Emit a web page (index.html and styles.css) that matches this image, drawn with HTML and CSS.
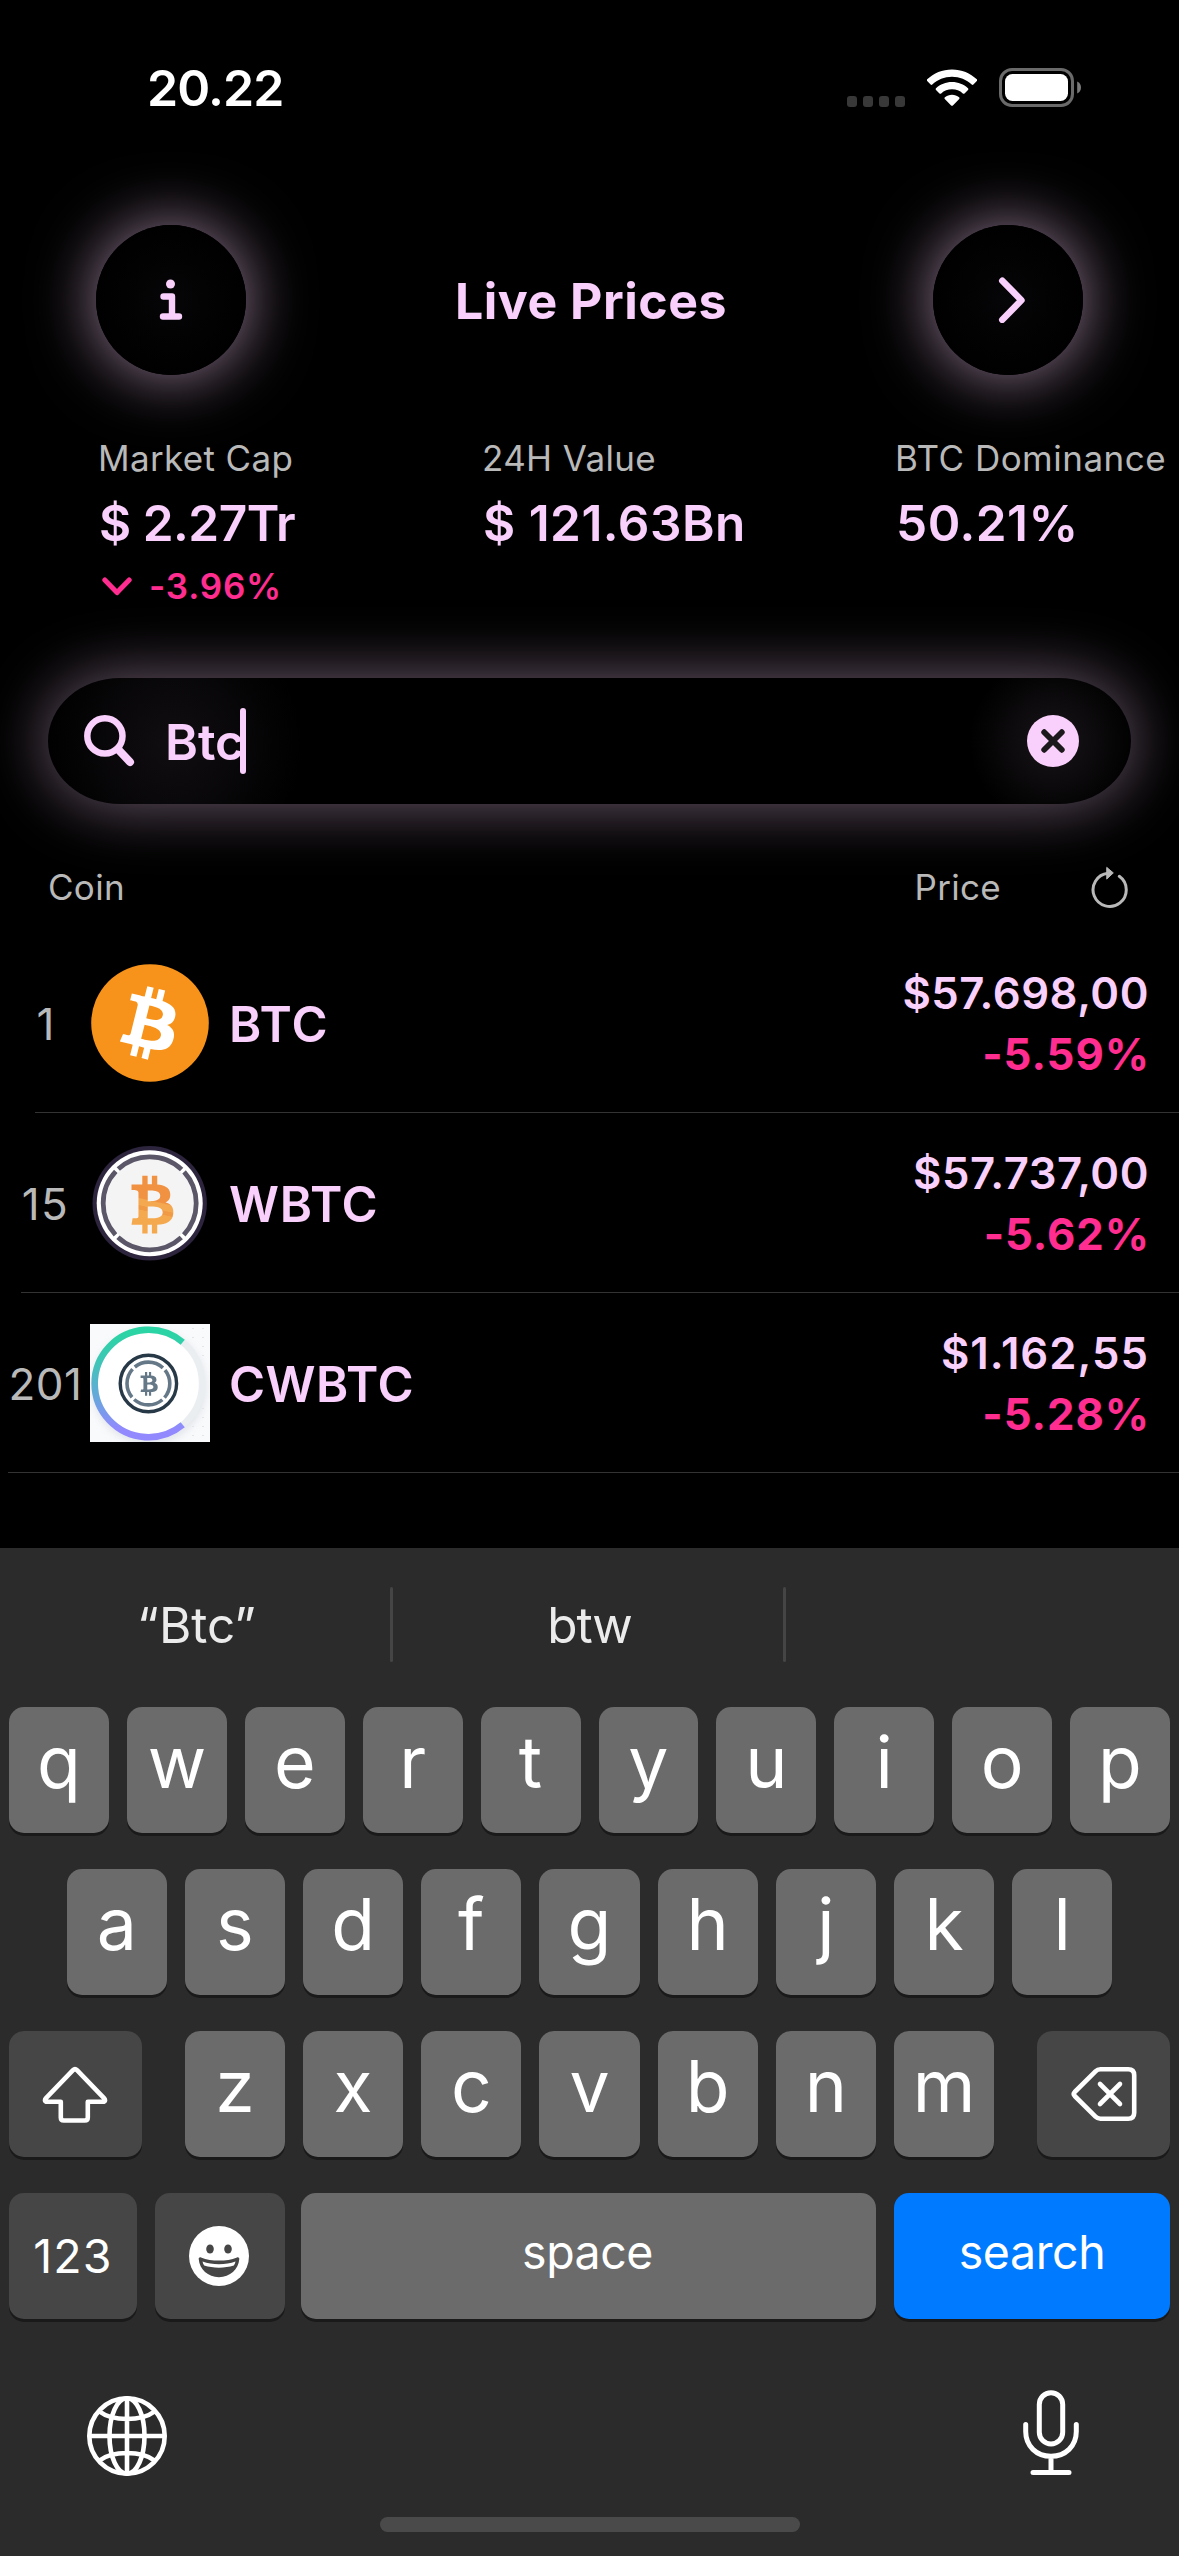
FILE: index.html
```html
<!DOCTYPE html>
<html lang="en">
<head>
<meta charset="utf-8">
<title>Live Prices</title>
<link rel="stylesheet" href="styles.css">
</head>
<body>
<svg class="defs" width="0" height="0" aria-hidden="true">
  <symbol id="bitcoin" viewBox="0 0 32 32" overflow="visible">
    <path d="M23.189 14.02c.314-2.096-1.283-3.223-3.465-3.975l.708-2.84-1.728-.43-.69 2.765c-.454-.114-.92-.22-1.385-.326l.695-2.783L15.596 6l-.708 2.839c-.376-.086-.746-.17-1.104-.26l.002-.009-2.384-.595-.46 1.846s1.283.294 1.256.312c.7.175.826.638.805 1.006l-.806 3.235c.048.012.11.03.18.057l-.183-.045-1.13 4.532c-.086.212-.303.531-.793.41.018.025-1.256-.313-1.256-.313l-.858 1.978 2.25.561c.418.105.828.215 1.231.318l-.715 2.872 1.727.43.708-2.84c.472.127.93.245 1.378.357l-.706 2.828 1.728.43.715-2.866c2.948.558 5.164.333 6.097-2.333.752-2.146-.037-3.385-1.588-4.192 1.13-.26 1.98-1.003 2.207-2.538zm-3.95 5.538c-.533 2.147-4.148.986-5.32.695l.95-3.805c1.172.293 4.929.872 4.37 3.11zm.535-5.569c-.487 1.953-3.495.96-4.47.717l.86-3.45c.975.243 4.118.696 3.61 2.733z"/>
  </symbol>
</svg>

<div class="screen">
  <div class="status">
    <span class="clock">20.22</span>
    <div class="indicators">
      <div class="signal"><i></i><i></i><i></i><i></i></div>
      <svg class="wifi" width="50" height="38" viewBox="0 0 50 38">
        <g fill="#fff">
          <path d="M25 .4C34.600 .4 43.400 4.100 49.800 10.300c.5.5.5 1.200 0 1.700l-3.400 3.500c-.5.5-1.200.5-1.700 0C39.500 10.600 32.600 7.700 25 7.700S10.500 10.600 5.300 15.500c-.5.5-1.200.5-1.700 0L.2 12c-.5-.5-.5-1.200 0-1.700C6.600 4.100 15.400.4 25 .4z"/>
          <path d="M25 13c6.200 0 11.800 2.300 16 6.200.5.5.5 1.200 0 1.700l-3.500 3.500c-.5.5-1.200.5-1.700 0-2.900-2.600-6.600-4.100-10.800-4.100s-7.900 1.500-10.800 4.100c-.5.5-1.200.5-1.700 0L9 20.900c-.5-.5-.5-1.200 0-1.700 4.200-3.900 9.800-6.200 16-6.200z"/>
          <path d="M25 25.800c2.700 0 5.200.9 7.100 2.500.6.500.6 1.200.1 1.700l-6.300 6.400c-.5.5-1.300.5-1.800 0L17.800 30c-.5-.5-.5-1.200.1-1.700 1.900-1.600 4.400-2.500 7.100-2.500z"/>
        </g>
      </svg>
      <svg class="battery" width="83" height="39" viewBox="0 0 83 39">
        <rect x="1.500" y="1.500" width="72" height="36" rx="11.500" fill="none" stroke="#6a6a6a" stroke-width="3"/>
        <rect x="6" y="6" width="63" height="27" rx="7.500" fill="#fff"/>
        <path d="M78.200 13.500c2.300 1 3.800 3.300 3.800 6s-1.500 5-3.800 6z" fill="#7a7a7a"/>
      </svg>
    </div>
  </div>

  <header class="top">
    <div class="round">
      <svg width="24" height="42" viewBox="0 0 24 42" fill="none" stroke="#f9cffb" stroke-linecap="round" stroke-linejoin="round">
        <circle cx="11.500" cy="5" r="4.500" fill="#f9cffb" stroke="none"/>
        <path d="M4.500 17.500h8.500v19.500M4 37.500h16" stroke-width="6.400"/>
      </svg>
    </div>
    <h1>Live Prices</h1>
    <div class="round next">
      <svg width="28" height="46" viewBox="0 0 28 46" fill="none" stroke="#f9cffb" stroke-width="6.600" stroke-linecap="round" stroke-linejoin="round"><path d="M4.300 3.800 23.400 23.300 4.300 42.800"/></svg>
    </div>
  </header>

  <section class="stats">
    <div class="stat">
      <span class="label">Market Cap</span>
      <span class="value cap">$ 2.27Tr</span>
      <span class="change">
        <svg width="30" height="19" viewBox="0 0 30 19" fill="none" stroke="#ff2d8f" stroke-width="5" stroke-linecap="round" stroke-linejoin="round"><path d="M2.800 3 15 15.600 27.200 3"/></svg>
        -3.96%
      </span>
    </div>
    <div class="stat">
      <span class="label">24H Value</span>
      <span class="value vol">$ 121.63Bn</span>
    </div>
    <div class="stat">
      <span class="label dom-label">BTC Dominance</span>
      <span class="value dom">50.21%</span>
    </div>
  </section>

  <div class="search">
    <svg width="51" height="52" viewBox="0 0 51 52" fill="none" stroke="#f9cffb" stroke-linecap="round"><circle cx="20.900" cy="20.900" r="17.600" stroke-width="6.500"/><path d="M34.500 34.800 46 47" stroke-width="8"/></svg>
    <span class="query">Btc</span><span class="caret"></span>
    <svg class="clear" width="52" height="52" viewBox="0 0 52 52"><circle cx="26" cy="26" r="26" fill="#f9cffb"/><path d="M17.200 17.200 34.800 34.800M34.800 17.200 17.200 34.800" stroke="#1c191c" stroke-width="5.800" stroke-linecap="round"/></svg>
  </div>

  <div class="columns">
    <span>Coin</span>
    <span class="price-head">Price</span>
    <svg width="38" height="42" viewBox="0 0 38 42" fill="none" stroke="#b9b9b9" stroke-width="3" stroke-linecap="round"><path d="M28.300 10.300A16.600 16.600 0 1 1 17 7.300"/><path d="M16 1.600 22.300 6.900 16 12.800z" fill="#b9b9b9" stroke-width="1"/></svg>
  </div>

  <div class="list">
    <div class="row">
      <span class="rank">1</span>
      <svg class="coin" width="120" height="118" viewBox="0 0 120 118">
        <circle cx="60" cy="59" r="58.800" fill="#f7931a"/>
        <use href="#bitcoin" x="-.2" y="0" width="118" height="118" fill="#fff"/>
      </svg>
      <span class="name btc">BTC</span>
      <div class="quote"><span class="price">$57.698,00</span><span class="pct">-5.59%</span></div>
    </div>
    <div class="line first"></div>

    <div class="row">
      <span class="rank two">15</span>
      <svg class="coin" width="120" height="120" viewBox="0 0 120 120">
        <defs><linearGradient id="amber" x1="19" y1="6" x2="10" y2="24" gradientUnits="userSpaceOnUse"><stop offset=".44" stop-color="#f09242"/><stop offset=".46" stop-color="#f4a850"/><stop offset=".56" stop-color="#f4a850"/><stop offset=".57" stop-color="#f09a45"/><stop offset=".63" stop-color="#f09a45"/><stop offset=".64" stop-color="#f5a94f"/></linearGradient></defs>
        <circle cx="59.700" cy="60.300" r="57.200" fill="#2d243d"/>
        <circle cx="59.700" cy="60.300" r="53" fill="#fff"/>
        <circle cx="59.700" cy="60.300" r="44" fill="#f4f4f4"/>
        <circle cx="59.700" cy="60.300" r="46.500" fill="none" stroke="#5c5768" stroke-width="4.800" stroke-dasharray="69.540 3.500" stroke-dashoffset="34.770"/>
        <g transform="translate(61.300 61.300) rotate(-14) scale(3) translate(-16.200 -16)" fill="url(#amber)"><use href="#bitcoin" width="32" height="32"/></g>
      </svg>
      <span class="name">WBTC</span>
      <div class="quote"><span class="price">$57.737,00</span><span class="pct">-5.62%</span></div>
    </div>
    <div class="line second"></div>

    <div class="row">
      <span class="rank three">201</span>
      <svg class="coin" width="120" height="118" viewBox="0 0 120 118">
        <defs>
          <linearGradient id="ring" x1="0" y1="3" x2="0" y2="117" gradientUnits="userSpaceOnUse"><stop offset=".05" stop-color="#2ad4a4"/><stop offset=".3" stop-color="#3ec6b6"/><stop offset=".6" stop-color="#64a9da"/><stop offset=".9" stop-color="#9289ff"/></linearGradient>
          <filter id="soft" x="-20%" y="-20%" width="140%" height="140%"><feGaussianBlur stdDeviation="4"/></filter>
        </defs>
        <rect width="120" height="118" fill="#f9fafc"/>
        <circle cx="59" cy="63" r="57" fill="#d5dae0" opacity=".7" filter="url(#soft)"/>
        <g fill="#e3e6ea"><rect x="102" y="4" width="2" height="1"/><rect x="112" y="4" width="2" height="1"/><rect x="102" y="13" width="2" height="1"/><rect x="112" y="13" width="2" height="1"/><rect x="112" y="22" width="2" height="1"/><rect x="112" y="31" width="2" height="1"/><rect x="112" y="84" width="2" height="1"/><rect x="112" y="93" width="2" height="1"/><rect x="102" y="102" width="2" height="1"/><rect x="112" y="102" width="2" height="1"/><rect x="102" y="111" width="2" height="1"/><rect x="112" y="111" width="2" height="1"/></g>
        <circle cx="58.400" cy="59.500" r="53.700" fill="#fff" stroke="#ebeef1" stroke-width="6.600"/>
        <path d="M92.700 18.200A53.700 53.700 0 1 0 92.700 100.800" fill="none" stroke="url(#ring)" stroke-width="6.600"/>
        <circle cx="58.400" cy="59.500" r="28.200" fill="none" stroke="#273847" stroke-width="3.400"/>
        <circle cx="58.400" cy="59.500" r="21.400" fill="none" stroke="#657888" stroke-width="3.600" stroke-dasharray="30.600 3" stroke-dashoffset="15.300"/>
        <g transform="translate(58.700 59.700) rotate(-14) scale(1.230) translate(-16.200 -16)" fill="#657888"><use href="#bitcoin" width="32" height="32"/></g>
      </svg>
      <span class="name long">CWBTC</span>
      <div class="quote"><span class="price small">$1.162,55</span><span class="pct">-5.28%</span></div>
    </div>
    <div class="line third"></div>
  </div>

  <div class="keyboard">
    <div class="suggestions">
      <span>“Btc”</span><i></i><span class="btw">btw</span><i></i><span></span>
    </div>
    <div class="keys">
      <b>q</b><b>w</b><b>e</b><b>r</b><b>t</b><b>y</b><b>u</b><b>i</b><b>o</b><b>p</b>
    </div>
    <div class="keys home-row">
      <b>a</b><b>s</b><b>d</b><b>f</b><b>g</b><b>h</b><b>j</b><b>k</b><b>l</b>
    </div>
    <div class="keys third-row">
      <div class="key wide shift">
        <svg width="66" height="57" viewBox="0 0 66 57" fill="none" stroke="#fff" stroke-width="4.600" stroke-linejoin="round"><path d="M31 4.200 4 32.200C2.300 34 2.800 35.800 5 35.800H18.800V51.500Q18.800 54.500 21.800 54.500H42.800Q45.800 54.500 45.800 51.500V35.800H61C63.200 35.800 63.700 34 62 32.200L35 4.200Q33 2.200 31 4.200z"/></svg>
      </div>
      <div class="letters"><b>z</b><b>x</b><b>c</b><b>v</b><b>b</b><b>n</b><b>m</b></div>
      <div class="key wide">
        <svg width="66" height="56" viewBox="0 0 66 56" fill="none" stroke="#fff" stroke-width="4.600" stroke-linejoin="round" stroke-linecap="round"><path d="M29.500 3.300H57.200Q63.200 3.300 63.200 9.300V46.700Q63.200 52.700 57.200 52.700H29.500Q26.500 52.700 24.500 50.700L3.700 30Q1.800 28 3.700 26L24.500 5.300Q26.500 3.300 29.500 3.300z"/><path d="M29 18 49 38M49 18 29 38"/></svg>
      </div>
    </div>
    <div class="keys bottom-row">
      <div class="key num">123</div>
      <div class="key emoji">
        <svg width="60" height="60" viewBox="0 0 60 60"><circle cx="30" cy="30" r="30" fill="#fff"/><g fill="#464646"><ellipse cx="21" cy="23" rx="3.800" ry="4.600"/><ellipse cx="39" cy="23" rx="3.800" ry="4.600"/><path d="M12 31.400c5.500 2.200 11.500 3.100 18 3.100s12.500-.9 18-3.100c1.300-.5 2.400.3 2.300 1.700C49.500 43.300 41 51.200 30 51.200S10.500 43.300 9.700 33.100c-.1-1.400 1-2.200 2.300-1.700z"/></g><path d="M13.500 35.500c5 1.900 10.500 2.700 16.500 2.700s11.500-.8 16.500-2.700c-.3 1.500-.9 2.900-1.700 4.100C40.200 41 35.400 41.700 30 41.700S19.800 41 15.200 39.600c-.8-1.200-1.400-2.600-1.700-4.100z" fill="#fff"/></svg>
      </div>
      <div class="key space">space</div>
      <div class="key go">search</div>
    </div>
    <div class="tools">
      <svg class="globe" width="80" height="80" viewBox="0 0 80 80" fill="none" stroke="#fff" stroke-width="4.600"><circle cx="40" cy="40" r="37.700"/><ellipse cx="40" cy="40" rx="17.500" ry="37.700"/><path d="M40 2v76M2 40h76M12.500 15.500C19 20.500 29 23 40 23s21-2.500 27.500-7.500M12.500 64.500C19 59.500 29 57 40 57s21 2.500 27.500 7.500"/></svg>
      <svg width="56" height="86" viewBox="0 0 56 86" fill="none" stroke="#fff" stroke-width="5" stroke-linecap="round"><rect x="16.300" y="2.700" width="23.400" height="51.200" rx="11.700"/><path d="M2.700 34.500V41.500C2.700 56 13.500 66.300 28 66.300S53.300 56 53.300 41.500V34.500M28 66.300V82M10 82.400H46"/></svg>
    </div>
    <div class="home"></div>
  </div>
</div>
</body>
</html>
```
FILE: styles.css
```css
* { box-sizing: border-box; }

body {
  margin: 0;
  background: #000;
  color: #f9cffb;
  font-family: Inter, "Liberation Sans", sans-serif;
}

svg { display: block; flex: none; }
.defs { position: absolute; }

.screen {
  width: 1179px;
  height: 2556px;
  overflow: hidden;
  display: flex;
  flex-direction: column;
}

/* Status bar */
.status {
  height: 175px;
  padding: 0 97px 0 147px;
  display: flex;
  align-items: center;
  justify-content: space-between;
  color: #fff;
}
.clock { font-size: 50px; font-weight: 600; letter-spacing: -0.9px; }
.indicators { display: flex; align-items: center; }
.signal { display: flex; gap: 6px; margin: 27px 22px 0 0; }
.signal i { width: 10px; height: 11px; border-radius: 3px; background: #383838; }
.battery { margin-left: 22px; }

/* Title bar */
.top {
  height: 150px;
  margin-top: 50px;
  padding: 0 96px;
  display: flex;
  align-items: center;
  justify-content: space-between;
}
.round {
  width: 150px;
  height: 150px;
  border-radius: 50%;
  display: flex;
  align-items: center;
  justify-content: center;
  background: radial-gradient(circle, #060507, #000 75%);
  box-shadow: 0 0 64px rgba(249, 207, 251, 0.64);
}
.next { padding-left: 7px; }
h1 {
  margin: 2px 0 0 3px;
  font-size: 50px;
  font-weight: 700;
  letter-spacing: 0.5px;
}

/* Market figures */
.stats {
  height: 172px;
  margin-top: 61px;
  padding-left: 98px;
  display: grid;
  grid-template-columns: 384px 413px auto;
}
.stat { display: flex; flex-direction: column; white-space: nowrap; }
.label {
  font-size: 35px;
  line-height: 44px;
  letter-spacing: 0.35px;
  color: #b9b9b9;
}
.dom-label { letter-spacing: 0.5px; }
.value {
  margin: 13px 0 11px 1px;
  font-size: 49.5px;
  font-weight: 600;
  line-height: 60px;
}
.cap { letter-spacing: -0.5px; }
.vol { letter-spacing: 0.5px; }
.dom { letter-spacing: 0.5px; }
.change {
  display: flex;
  align-items: center;
  gap: 17px;
  margin-left: 4px;
  font-size: 35px;
  font-weight: 600;
  line-height: 44px;
  letter-spacing: 0.8px;
  color: #ff2d8f;
}

/* Search field */
.search {
  height: 126px;
  margin: 70px 48px 0;
  padding: 0 52px 0 36px;
  display: flex;
  align-items: center;
  border-radius: 72px / 63px;
  background:
    radial-gradient(circle 130px at 125px 66px, #110e12, rgba(0, 0, 0, 0)),
    radial-gradient(circle 84px at 1005px 63px, #191519, rgba(0, 0, 0, 0)),
    #000;
  box-shadow: 0 0 64px rgba(249, 207, 251, 0.46);
}
.query {
  margin: 2px 0 0 30px;
  font-size: 50px;
  font-weight: 600;
}
.caret {
  width: 6px;
  height: 66px;
  margin-left: -4px;
  border-radius: 3px;
  background: #f9cffb;
}
.clear { margin-left: auto; }

/* Column titles */
.columns {
  height: 129px;
  padding: 37px 50px 0 48px;
  display: flex;
  align-items: center;
  font-size: 35px;
  letter-spacing: 0.3px;
  color: #b9b9b9;
}
.price-head { margin: 0 90px 0 auto; }

/* Coins */
.row {
  height: 179px;
  padding-right: 30px;
  display: flex;
  align-items: center;
}
.rank {
  width: 90px;
  flex: none;
  padding: 2px 0 0 1px;
  text-align: center;
  font-size: 44px;
  color: #b9b9b9;
}
.two { letter-spacing: 1.4px; }
.three { letter-spacing: 0.5px; }
.name {
  margin: 3px 0 0 19px;
  font-size: 49px;
  font-weight: 600;
  letter-spacing: 0.7px;
}
.btc { letter-spacing: 1.1px; }
.long { letter-spacing: 0.5px; }
.quote {
  margin-left: auto;
  padding-top: 2px;
  display: flex;
  flex-direction: column;
  align-items: flex-end;
  font-size: 43.7px;
  line-height: 61px;
}
.price { font-weight: 600; letter-spacing: 0.5px; }
.small { letter-spacing: 1px; }
.pct { margin-right: -1px; font-weight: 700; letter-spacing: 0.9px; color: #ff2d8f; }
.line { height: 1px; background: #333; }
.first { margin-left: 35px; }
.second { margin-left: 21px; }
.third { margin-left: 8px; }

/* Keyboard */
.keyboard {
  flex: none;
  height: 1008px;
  margin-top: 75px;
  background: #2b2b2b;
  color: #fff;
}
.suggestions {
  height: 153px;
  margin-bottom: 6px;
  display: grid;
  grid-template-columns: 390px 3px 390px 3px 1fr;
  align-items: center;
  text-align: center;
  font-size: 49.5px;
  color: #ebebeb;
}
.suggestions span { padding-left: 3px; }
.suggestions i { height: 75px; border-radius: 2px; background: #454545; }
.btw { letter-spacing: -1px; }

.keys {
  height: 126px;
  margin-bottom: 36px;
  padding: 0 9px;
  display: flex;
  justify-content: center;
  gap: 18px;
}
.letters, .home-row { display: flex; gap: 18.100px; }
.keys b, .key {
  height: 126px;
  border-radius: 15px;
  display: flex;
  align-items: center;
  justify-content: center;
  background: #6b6b6b;
  box-shadow: 0 3px 0 #1a1a1a;
}
.keys b {
  width: 99.900px;
  padding-bottom: 17px;
  font-size: 71.5px;
  font-weight: 400;
}
.letters b, .home-row b { width: 100.100px; }
.key { font-size: 46.5px; }
.third-row { justify-content: space-between; }
.wide { width: 133px; }
.shift { padding-right: 2px; }
.wide, .num, .emoji { background: #464646; }
.bottom-row { margin-bottom: 0; }
.num { width: 128px; letter-spacing: 1.2px; }
.emoji { width: 130px; padding-right: 2px; }
.space { width: 575px; margin-left: -2px; padding: 0 2px 8px 0; letter-spacing: -0.5px; }
.go { width: 276px; padding-bottom: 8px; background: #007aff; letter-spacing: -0.4px; }

.tools {
  height: 86px;
  margin-top: 71px;
  padding: 0 100px 0 87px;
  display: flex;
  justify-content: space-between;
}
.globe { margin-top: 6px; }
.home {
  width: 420px;
  height: 15px;
  margin: 41px auto 0;
  border-radius: 8px;
  background: #4a4a4a;
}
```
